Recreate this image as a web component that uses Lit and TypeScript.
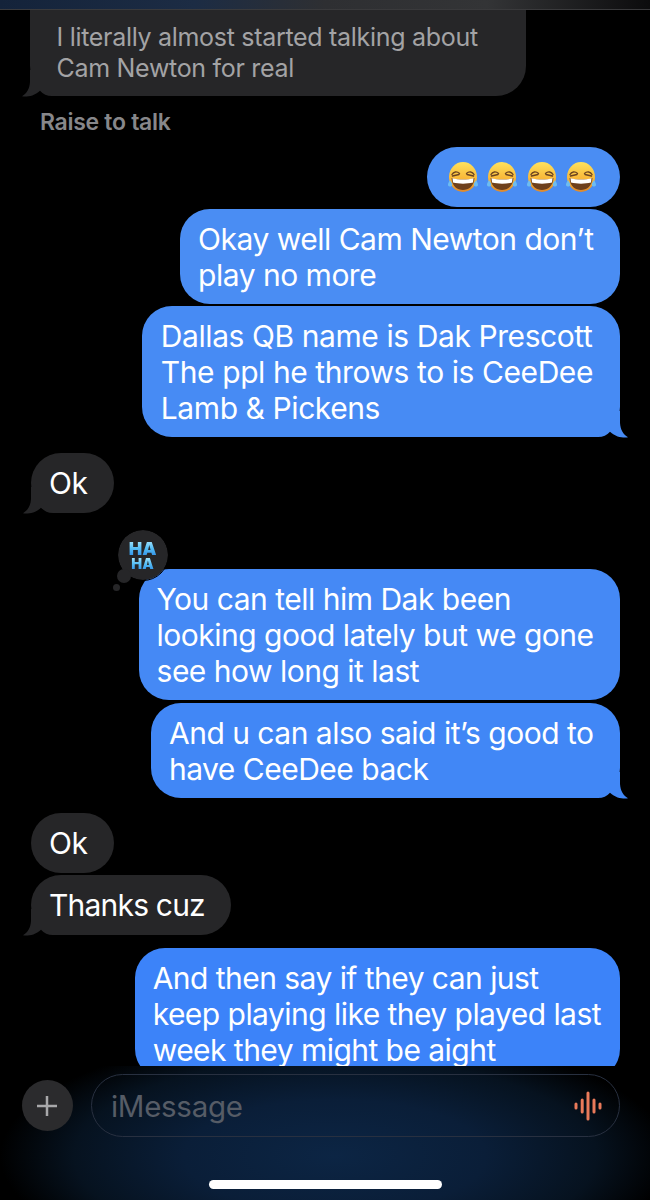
import { LitElement, html, css, svg } from "lit";
import { customElement } from "lit/decorators.js";

const tailPath = "M0 -26V-14C0.500 -7 3 -3 8 0.300C4 1 -4 0.500 -10 -5.300C-13 -2 -17 0 -22 0H-30V-26Z";
const tailR = svg`<svg class="tail tr" viewBox="-30 -30 40 32" width="40" height="32"><path d="${tailPath}" fill="currentColor"/></svg>`;
const tailL = svg`<svg class="tail tl" viewBox="-30 -30 40 32" width="40" height="32"><path d="${tailPath}" fill="currentColor"/></svg>`;

const emoji = html`<svg class="emoji" viewBox="0 0 32 32" width="32" height="32">
  <defs><linearGradient id="face" x1="0" y1="0" x2="0" y2="1"><stop offset="0" stop-color="#ffe25c"/><stop offset="0.6" stop-color="#f8b436"/><stop offset="1" stop-color="#dd872c"/></linearGradient></defs>
  <ellipse cx="16" cy="16" rx="14" ry="15" fill="url(#face)"/>
  <path d="M5 13.500C6.500 10.500 10 10 12.500 12.500M27 13.500C25.500 10.500 22 10 19.500 12.500M5.500 15L12 13.500M26.500 15L20 13.500" stroke="#6b4320" stroke-width="1.400" fill="none" stroke-linecap="round"/>
  <path d="M4.500 17C10 19 22 19 27.500 17C27 25.500 21.500 29 16 29C10.500 29 5 25.500 4.500 17Z" fill="#6e401c"/>
  <path d="M5.500 17.300C11 19 21 19 26.500 17.300L26 21.500C20 23 12 23 6 21.500Z" fill="#fff"/>
  <path d="M3 19C1.500 21.500 0.500 23 1.200 24.800C2 26 4.500 25.800 5.200 24.200C5.700 22.500 4 21 3 19Z" fill="#6cbcf2"/>
  <path d="M29 19C30.500 21.500 31.500 23 30.800 24.800C30 26 27.500 25.800 26.800 24.200C26.300 22.500 28 21 29 19Z" fill="#6cbcf2"/>
</svg>`;

@customElement("app-root")
export class AppRoot extends LitElement {
  static styles = css`
    :host { display: block; width: 650px; height: 1200px; overflow: hidden; background: #000; font-family: Inter, "Liberation Sans", sans-serif; }
    .page { height: 1200px; display: flex; flex-direction: column; }
    .top { height: 10px; flex: none; box-sizing: border-box; border-bottom: 1px solid #3a3a3c; background: linear-gradient(90deg, #14233a 0%, #1c2c44 30%, #2e2f32 50%, #333436 75%, #0c0c0d 100%); }
    .thread { flex: 1; min-height: 0; overflow: hidden; display: flex; flex-direction: column; padding: 0 30px 0 31px; box-sizing: border-box; }
    .row { display: flex; flex: none; }
    .row.me { justify-content: flex-end; }
    .b { position: relative; isolation: isolate; box-sizing: border-box; font-size: 30px; line-height: 36px; letter-spacing: -0.500px; border-radius: 30px; padding: 11.500px 26.500px 11.500px 18px; white-space: nowrap; }
    .me .b { background: var(--blue); color: #fff; }
    .them .b { background: #262628; color: #fff; }
    .one { min-height: 60px; }
    .tail { position: absolute; bottom: -2px; pointer-events: none; z-index: -1; }
    .me .tail { color: var(--blue); }
    .them .tail { color: #262628; }
    .tr { right: -10px; }
    .tl { left: -10px; transform: scaleX(-1); }
    .c1 { --blue: #4a8df3; }
    .c2 { --blue: #478bf4; }
    .c3 { --blue: #4589f5; }
    .c4 { --blue: #4187f6; }
    .c6 { --blue: #3c83f9; }
    .first { width: 496px; height: 86px; border-radius: 0 0 30px 30px; padding: 11.500px 26px 0 26.500px; margin-left: -1px; color: #a3a3a5 !important; font-size: 25px; line-height: 31px; letter-spacing: -0.300px; }
    .raise { flex: none; margin: 14px 0 0 9px; height: 25px; line-height: 25px; font-size: 23px; font-weight: 600; letter-spacing: -0.300px; color: #87878a; }
    .emojis { display: flex; gap: 7.300px; width: 193px; height: 60px; padding: 0 3px 0 0; align-items: center; justify-content: center; }
    .emoji { flex: none; }
    .wide { letter-spacing: -0.420px; padding-left: 19px; padding-right: 27px; }
    .tight { letter-spacing: -0.800px; }
    .last { padding-right: 19px; letter-spacing: -0.540px; }
    .tapback { position: absolute; left: -21px; top: -39px; width: 50px; height: 50px; border-radius: 50%; background: #262628; display: flex; flex-direction: column; align-items: center; justify-content: center; font-weight: 900; z-index: 1; line-height: 1; outline: 1px solid #000; box-sizing: border-box; letter-spacing: 0; }
    .tapback span { background: linear-gradient(180deg, #a9e8ff 0%, #55bdf5 50%, #2d8ce6 100%); -webkit-background-clip: text; background-clip: text; color: transparent; }
    .tapback .l1 { font-size: 18px; height: 17px; line-height: 17px; }
    .tapback .l2 { font-size: 14.500px; height: 14px; line-height: 14px; }
    .dot1 { position: absolute; left: -22px; top: 0; width: 14px; height: 14px; border-radius: 50%; background: #262628; z-index: 1; }
    .dot2 { position: absolute; left: -26px; top: 15px; width: 7px; height: 7px; border-radius: 50%; background: #262628; }
    .footer { flex: none; height: 134px; position: relative; display: flex; align-items: flex-start; gap: 18px; padding: 8px 30px 0 21px; box-sizing: border-box;
      background: radial-gradient(ellipse 335px 125px at 335px 90px, #0c2544 0%, #0a1e38 45%, #06121f 78%, #000 100%); }
    .plus { width: 52px; height: 63px; flex: none; display: flex; align-items: center; justify-content: center; }
    .plusc { width: 51px; height: 51px; border-radius: 50%; background: #2b2b2d; display: flex; align-items: center; justify-content: center; }
    .field { flex: 1; height: 63px; border: 1.500px solid #283040; border-radius: 32px; display: flex; align-items: center; justify-content: space-between; padding: 0 17px 0 19px; box-sizing: border-box; }
    .ph { font-size: 29.500px; letter-spacing: -0.300px; color: #565c66; }
    .bar { position: absolute; left: 209px; top: 114px; width: 233px; height: 9px; border-radius: 5px; background: #fff; }
  `;

  render() {
    return html`<div class="page">
      <div class="top"></div>
      <div class="thread">
        <div class="row them"><div class="b first">I literally almost started talking about<br />Cam Newton for real${tailL}</div></div>
        <div class="raise">Raise to talk</div>
        <div class="row me c1" style="margin-top:12px"><div class="b emojis">${emoji}${emoji}${emoji}${emoji}</div></div>
        <div class="row me c1" style="margin-top:2px"><div class="b">Okay well Cam Newton don’t<br />play no more</div></div>
        <div class="row me c2" style="margin-top:2px"><div class="b wide">Dallas QB name is Dak Prescott<br />The ppl he throws to is CeeDee<br />Lamb &amp; Pickens${tailR}</div></div>
        <div class="row them" style="margin-top:16px"><div class="b one">Ok${tailL}</div></div>
        <div class="row me c3" style="margin-top:56px"><div class="b"><div class="tapback"><span class="l1">HA</span><span class="l2">HA</span></div><div class="dot1"></div><div class="dot2"></div>You can tell him Dak been<br />looking good lately but we gone<br />see how long it last</div></div>
        <div class="row me c4" style="margin-top:3px"><div class="b">And u can also said it’s good to<br />have CeeDee back${tailR}</div></div>
        <div class="row them" style="margin-top:15px"><div class="b one">Ok</div></div>
        <div class="row them" style="margin-top:2px"><div class="b one tight">Thanks cuz${tailL}</div></div>
        <div class="row me c6" style="margin-top:13px"><div class="b last">And then say if they can just<br />keep playing like they played last<br />week they might be aight</div></div>
      </div>
      <div class="footer">
        <div class="plus"><div class="plusc"><svg viewBox="0 0 20 20" width="20" height="20"><path d="M10 0V20M0 10H20" stroke="#a8a8aa" stroke-width="2.500"/></svg></div></div>
        <div class="field"><span class="ph">iMessage</span>
          <svg viewBox="0 0 28 32" width="28" height="32"><g stroke="#ea7a5a" stroke-width="3" stroke-linecap="round"><path d="M2 14V18M8.200 10V22M14 3V29M20 10V22M26 14V18"/></g></svg>
        </div>
        <div class="bar"></div>
      </div>
    </div>`;
  }
}
